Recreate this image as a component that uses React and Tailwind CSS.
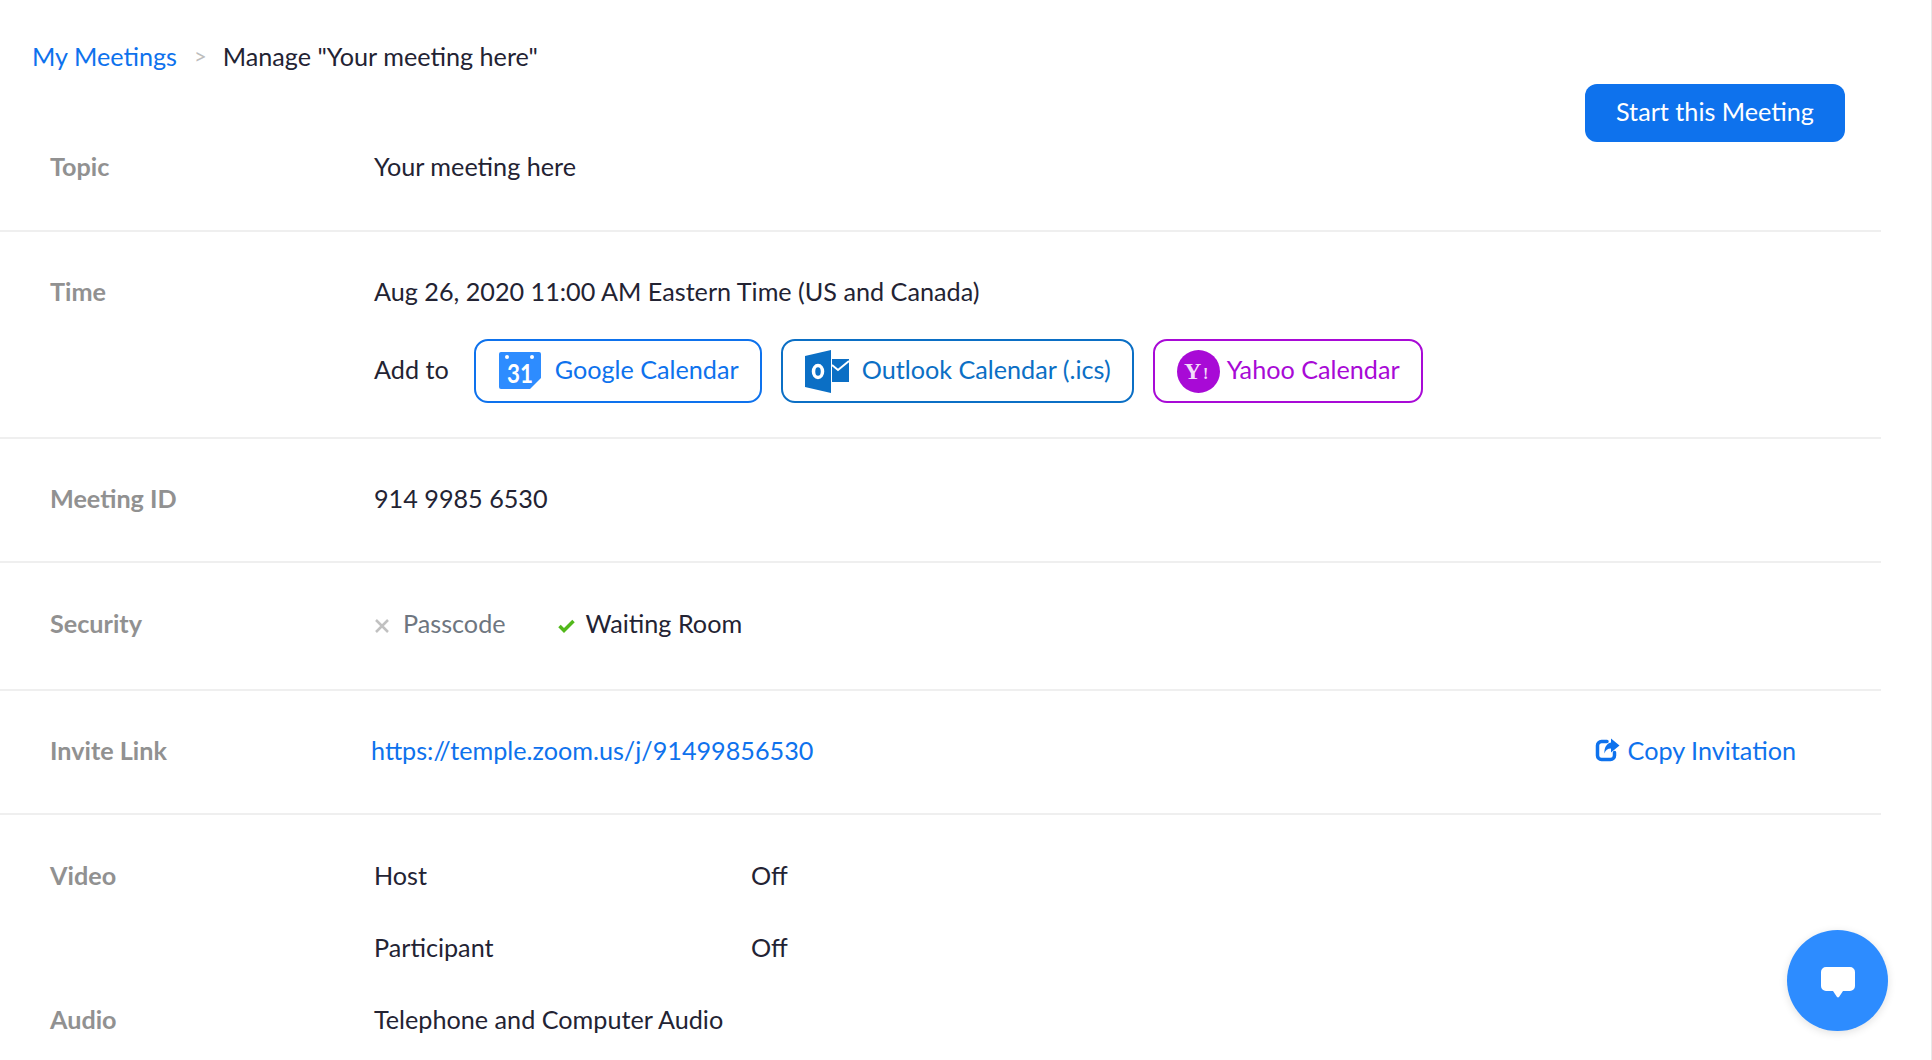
import React from "react";

const labelCls = "w-[374px] shrink-0 pl-[50px] font-bold text-[#919191]";

function GoogleIcon() {
  return (
    <svg width="42" height="38" viewBox="0 0 42 38" className="shrink-0">
      <path d="M2 0H40a2 2 0 0 1 2 2V26L31 37H2a2 2 0 0 1-2-2V2a2 2 0 0 1 2-2Z" fill="#2d8cff" />
      <circle cx="8" cy="5" r="2" fill="#fff" />
      <circle cx="33" cy="5" r="2" fill="#fff" />
      <text x="8" y="31" fontSize="26" fontWeight="700" fill="#fff" textLength="26" lengthAdjust="spacingAndGlyphs" fontFamily="Lato, sans-serif">31</text>
    </svg>
  );
}

function OutlookIcon() {
  return (
    <svg width="44" height="43" viewBox="0 0 44 43" className="shrink-0">
      <path d="M0 6 L26 0 V43 L0 37 Z" fill="#0b6fc5" />
      <ellipse cx="13" cy="21.500" rx="4.500" ry="6" fill="none" stroke="#fff" strokeWidth="3.500" />
      <rect x="27" y="9" width="17" height="23" fill="#0b6fc5" />
      <path d="M27 15L33 20 44 11" fill="none" stroke="#fff" strokeWidth="2" />
    </svg>
  );
}

function YahooIcon() {
  return (
    <svg width="43" height="43" viewBox="0 0 43 43" className="shrink-0">
      <circle cx="21.500" cy="21.500" r="21.500" fill="#a80ad6" />
      <text x="7" y="29" fontSize="24" fontWeight="700" fill="#f3dcfa" fontFamily="Liberation Serif, serif">Y</text>
      <text x="26" y="29" fontSize="16" fontWeight="700" fill="#f3dcfa" fontFamily="Liberation Serif, serif">!</text>
    </svg>
  );
}

function CopyIcon() {
  return (
    <svg width="25" height="24" viewBox="0 0 25 24" className="shrink-0">
      <path d="M12 3.500H6.500a4 4 0 0 0-4 4V17.500a4 4 0 0 0 4 4H15.500a4 4 0 0 0 4-4V14.500" fill="none" stroke="#0e72ed" strokeWidth="3.500" strokeLinecap="round" />
      <path d="M16 0.500L24.500 7.500 16 14.500V10.500C12.500 10.500 10.500 12 9.500 15.500 9 10 11.500 5.500 16 4.500Z" fill="#0e72ed" />
    </svg>
  );
}

function CalButton({ icon, text, cls, w }) {
  return (
    <a className={`flex h-[64px] items-center whitespace-nowrap rounded-[14px] border-2 ${cls} ${w}`}>
      {icon}
      <span className="pb-[4px]">{text}</span>
    </a>
  );
}

export default function App() {
  return (
    <div className="relative h-[1060px] w-full overflow-hidden border-r border-[#e8e8e8] bg-white text-[25.2px] leading-[30px] text-[#232333] [font-family:Lato,sans-serif]">
      <div className="w-[1881px]">
        <div className="flex border-b-2 border-[#efefef]">
          <div className="flex-1">
            <div className="flex items-center pl-[32px] pt-[41px]">
              <a className="text-[#0e72ed]">My Meetings</a>
              <span className="ml-[17px] mr-[16px] text-[22px] text-[#bdbdbd]">&gt;</span>
              <span>Manage "Your meeting here"</span>
            </div>
            <div className="flex pt-[80px] pb-[49px]">
              <div className={labelCls}>Topic</div>
              <div>Your meeting here</div>
            </div>
          </div>
          <div className="pr-[36px] pt-[84px]">
            <button className="h-[58px] w-[260px] rounded-[12px] bg-[#0e72ed] pb-[4px] text-white">Start this Meeting</button>
          </div>
        </div>

        <div className="flex border-b-2 border-[#efefef] pt-[44px] pb-[34px]">
          <div className={labelCls}>Time</div>
          <div>
            <div>Aug 26, 2020 11:00 AM Eastern Time (US and Canada)</div>
            <div className="mt-[33px] flex items-center">
              <span className="mr-[25px] pb-[5px]">Add to</span>
              <div className="flex gap-[19px]">
                <CalButton icon={<GoogleIcon />} text="Google Calendar" cls="gap-[14px] border-[#0e72ed] pl-[23px] text-[#0e72ed]" w="w-[288px]" />
                <CalButton icon={<OutlookIcon />} text="Outlook Calendar (.ics)" cls="gap-[13px] border-[#0b6fc5] pl-[22px] text-[#0b6fc5]" w="w-[353px]" />
                <CalButton icon={<YahooIcon />} text="Yahoo Calendar" cls="gap-[7px] border-[#a80ad6] pl-[22px] text-[#a80ad6]" w="w-[270px]" />
              </div>
            </div>
          </div>
        </div>

        <div className="flex border-b-2 border-[#efefef] pt-[44px] pb-[48px]">
          <div className={labelCls}>Meeting ID</div>
          <div>914 9985 6530</div>
        </div>

        <div className="flex border-b-2 border-[#efefef] pt-[45px] pb-[51px]">
          <div className={labelCls}>Security</div>
          <div className="flex items-center">
            <svg width="16" height="16" viewBox="0 0 16 16" className="mr-[13px] mt-[5px]">
              <path d="M2 2L14 14M14 2L2 14" stroke="#c1c1c1" strokeWidth="2.500" />
            </svg>
            <span className="text-[#6e7680]">Passcode</span>
            <svg width="17" height="17" viewBox="0 0 17 17" className="ml-[52px] mr-[11px] mt-[5px]">
              <path d="M1.500 9L6 13.500 15.500 4" fill="none" stroke="#52b81b" strokeWidth="3.500" />
            </svg>
            <span>Waiting Room</span>
          </div>
        </div>

        <div className="flex items-center border-b-2 border-[#efefef] pt-[44px] pb-[48px]">
          <div className={labelCls}>Invite Link</div>
          <a className="-ml-[3px] text-[#0e72ed]">https://temple.zoom.us/j/91499856530</a>
          <a className="ml-auto mr-[85px] flex items-center gap-[8px] text-[#0e72ed]">
            <CopyIcon />
            Copy Invitation
          </a>
        </div>

        <div className="pt-[45px]">
          <div className="flex h-[72px]">
            <div className={labelCls}>Video</div>
            <div className="w-[377px]">Host</div>
            <div>Off</div>
          </div>
          <div className="flex h-[72px]">
            <div className={labelCls} />
            <div className="w-[377px]">Participant</div>
            <div>Off</div>
          </div>
          <div className="flex h-[72px]">
            <div className={labelCls}>Audio</div>
            <div>Telephone and Computer Audio</div>
          </div>
        </div>
      </div>

      <button className="absolute left-[1787px] top-[930px] flex h-[101px] w-[101px] items-center justify-center rounded-full bg-[#2d8cff] pt-[4px] shadow-[0_2px_8px_rgba(0,0,0,0.12)]">
        <svg width="34" height="31" viewBox="0 0 34 31">
          <path d="M5 0H29a5 5 0 0 1 5 5V19a5 5 0 0 1-5 5H22L18 30a1.500 1.500 0 0 1-2 0L12 24H5a5 5 0 0 1-5-5V5a5 5 0 0 1 5-5Z" fill="#fff" />
        </svg>
      </button>
    </div>
  );
}
